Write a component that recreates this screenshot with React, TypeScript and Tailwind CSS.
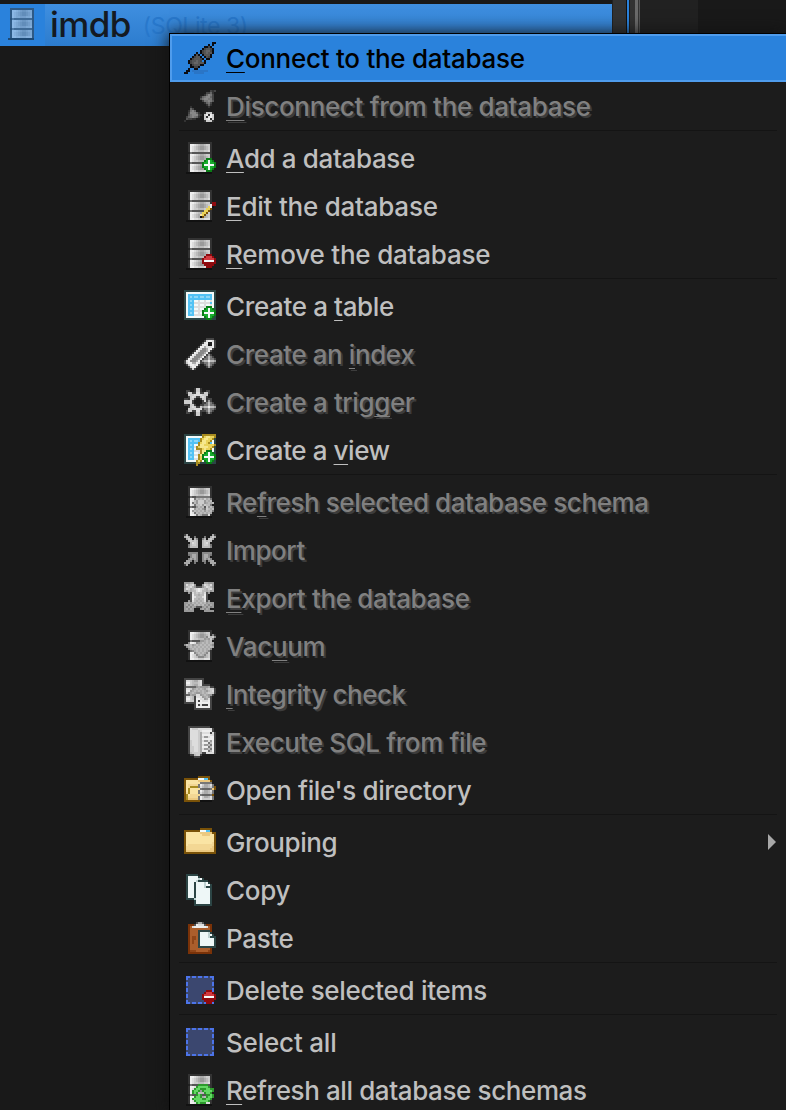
import React from "react";

const PALETTE: Record<string, string> = {
  k: "#0a0c12", W: "#f4fafa", G: "#0a7d16", g: "#17ae2e", R: "#8e0a0e", r: "#d23a40",
  t: "#2c4545", q: "#52c2f4", Q: "#8fd8f6", Y: "#ead35a", y: "#a88c20", o: "#7a5208",
  F: "#fae4a4", P: "#ecc980", N: "#3b476f", n: "#4c74ea", H: "#7a3208", B: "#ab5e2c",
  D: "#8f4518", V: "#eef7f7", v: "#bfd2d2", L: "#63d863", l: "#2c9a2c", S: "#2a75c6",
  E: "#f3d794", h: "#f6e88e",
};

const colorOf = (ch: string) => (/[0-9a-f]/.test(ch) ? `#${ch.repeat(6)}` : PALETTE[ch]);

const overlay = (base: string[], top: string[], x: number, y: number) =>
  base.map((row, r) =>
    row
      .split("")
      .map((c, i) => {
        const t = top[r - y]?.[i - x];
        return t && t !== "." ? t : c;
      })
      .join(""),
  );

const mirror = (row: string) => row.split("").reverse().join("");

const DATABASE = [
  "..333333333333..",
  "..3eedcbaabccd3.",
  "..3edcba99abcc3.",
  "..3edcba99abcc3.",
  "..3edccbbbccdd3.",
  "..275555555557..",
  "..3eedcbaabccd3.",
  "..3edcba99abcc3.",
  "..3edcba99abcc3.",
  "..3edccbbbccdd3.",
  "..275555555557..",
  "..3eedcbaabccd3.",
  "..3edcba99abcc3.",
  "..3edcba99abcc3.",
  "..3eeddcccddde3.",
  ".1111111111111..",
].map((r, i) => (i > 0 && i < 15 ? `${r.slice(0, 13)}3..` : r));

const PLUS = ["..GGG..", ".GgWgG.", "GggWggG", "GWWWWWG", "GggWggG", ".GgWgG.", "..GGG.."];
const MINUS = ["..RRR..", ".RrrrR.", "RrrrrrR", "RWWWWWR", "RRRRRRR", ".RRRRR.", "..RRR.."];
const GRAY_PLUS = ["..494..", ".47b74.", "477b774", "9bbebb9", "477b774", ".47b74.", "..494.."];

const PENCIL = [
  ".......RR",
  "......eRR",
  ".....Ye1.",
  "....YYo..",
  "...YYo...",
  "..YYo....",
  ".FYo.....",
  ".ko......",
];

const ARROWS = [
  "...lllll...",
  "..lLLLLLl..",
  ".lLLlllLLll",
  "lLLl.lLLLLl",
  "lLl...lLLl.",
  "..lLl..llLl",
  ".lLLl..lLLl",
  "lLLLLllLLl.",
  ".lLLLLLLl..",
  "..lLlll....",
];

const GRAY_ARROWS = [
  "..7777777..",
  ".7babacab7.",
  ".b9ccc9bab.",
  "7b9ccc9abab",
  ".7bbc9cbb7.",
  "..9bab.c9b9",
  ".9bab97.bab",
  "9babab9bab7",
  ".7babababa.",
  "..7ba777...",
];

const TABLE = [
  "tttttttttttttttt",
  "tWWWWWWWWWWWWWWt",
  "tWqqqqqqqqqqqqWt",
  "tWqQqQQqQQqQQqWt",
  "tWqqqqqqqqqqqqWt",
  "tWqQqWWdWWdWWdWt",
  "tWqqqddddddddqWt",
  "tWqQqWWdWWdWWdWt",
  "tWqqqdddddddddWt",
  "tWqQqWWdWWdWWdWt",
  "tWqqqdddddddddWt",
  "tWqQqWWdWWdWWdWt",
  "tWqqqdddddddddWt",
  "tWWWWWWWWWWWWWWt",
  "tttttttttttttttt",
  "................",
];

const BOLT = [
  "....yyyyyyy",
  "....yYhhYYy",
  "...yYhhYYy.",
  "...yhhYYy..",
  "..yYhhYy...",
  "..yhhYYYYYy",
  ".yYhhhhYYy.",
  ".yyyYhYYy..",
  "...yhhYy...",
  "...yhYy....",
  "..yhYy.....",
  "..yYy......",
  "..yYy......",
  ".yYy.......",
  ".yy........",
  ".y.........",
];

const CONNECT = [
  "..............kk",
  "............k.k.",
  "..........kk4k..",
  ".........k4554k.",
  "........k45664k.",
  "......k.k45655k.",
  ".....k5k.k555k..",
  "....k455k.k54k..",
  "...k45554k.kk...",
  "..k455654.k.....",
  "..k4566555k.....",
  "...k4555kk......",
  "...kk44k........",
  "..k..kk.........",
  ".kk.SSSSSSSS....",
  "kk...SSSSS......",
];

const DISCONNECT = [
  ".............434",
  "...........4463.",
  "..........36874.",
  "........3678864.",
  "........5788774.",
  ".........477875.",
  "..........3674..",
  "...........363..",
  "...3........3...",
  "...64...........",
  "..3786..........",
  "..488863..3ccc3.",
  "..5788843.ce3ec.",
  ".4678763..c3dec.",
  ".54433....cde3c.",
  "3.........3ccc3.",
];

const TAG = [
  "...........4444.",
  "..........4deed4",
  ".........4de22e4",
  "........4ded12e4",
  ".......4eeaddde4",
  "......4ed88aee4.",
  ".....4ed888ae4..",
  "....4ed888ae4...",
  "...4ed888ae4....",
  "..4ed888ae4.....",
  ".4ed888ae4......",
  "4de888ae4.......",
  "4ceeaaed4.......",
  ".4ceede4........",
  "..4cee4.........",
  "...4c4..........",
];

const GEAR = [
  "................",
  "......3cc3......",
  "..44..3cc3..44..",
  "..4cc44dd44cc4..",
  "...cccddddccc...",
  "...4cdc44cdc4...",
  ".443cc4..4cc344.",
  ".cccd4....4dccc.",
  ".cccd4....4dccc.",
  ".443cc4..4cc344.",
  "...4cdc44cdc4...",
  "...cccddddccc...",
  "..4cc44dd44cc4..",
  "..44..3cc3..44..",
  "......3cc3......",
  "................",
].map((r, i) => (i === 0 ? r : `${r.slice(1)}.`));

const ARROW_IN = ["4a.....", "aca..7.", ".acb.b8", "..bcbcb", "...bdcb", "..7bccb", "..8bbbb"];
const IMPORT_TOP = ARROW_IN.map((r) => `${r}..${mirror(r)}`);
const IMPORT = [
  ...IMPORT_TOP,
  "................",
  "................",
  ...[...IMPORT_TOP].reverse().map((r) => r.replace(/[bcd]/g, (c) => ({ b: "8", c: "a", d: "a" })[c] as string)),
];

const EXPORT = [
  "999aa.....aa999",
  "9dbcd9...9dcbd9",
  "9bcdb95559bdcb9",
  "adcabcdedcbacda",
  "a9babbdedbbab9a",
  "..95dbcbcbd59..",
  "...5ebbabbe5...",
  "...5edbbbde5...",
  "...5ebbabbe5...",
  "..95dbababd59..",
  "99a9bababab9a99",
  "9a8a9babab9a8a9",
  "98a8a95559a8a89",
  "9a8a9...  9a8a9".replace("  ", ""),
  "99999.....99999",
  "...............",
];

const BRUSH = [
  ".............383",
  "...........8.bc8",
  "..........9a9c8.",
  "........99abab..",
  "..8...89abababa.",
  "8bab9ababababa8.",
  ".8ababababababa.",
  "..8ababababab8..",
  "....8abababa8...",
  ".....8ababa8....",
  "......8aba8.....",
  ".......888......",
];

const INTEGRITY = [
  "4444444444......",
  "4ddcbaacd4......",
  "4eecbbbcd4......",
  "4ddcbaacd4444...",
  "4666669a9999a44.",
  "4ddc9ababa9bccc4",
  "4ee9abababa9bcd4",
  "4d9aba99ababccc4",
  "466a99dd9aba994.",
  "4ddcb4ddd9ab94..",
  "4eecb4eedd9ad4..",
  "4ddcc4e4eddde4..",
  "444444eeeeeee4..",
  ".....4e4d444e4..",
  ".....4eeeeeee4..",
  ".....444444444..",
];

const SCRIPT = [
  "..44444444444...",
  "..4dcccddddddd4.",
  "..4ddddcdeeeee4.",
  "..4ddddcadddd4d4",
  "..4ddddcaeeeedd4",
  "..4ddddcad99dee4",
  "..4ddddcaeeeeee4",
  "..4cdddcad99d9e4",
  "..4cdddcaeee7be4",
  "..4cdddcad99b7e4",
  "..4ccddcaeee7be4",
  "..4ccddcad99b7e4",
  "..4ccddcaeee7be4",
  "..4bcccca44dddd4",
  "...44bcc4.......",
  ".....444........",
];

const FOLDER = [
  "................",
  "........oooooo..",
  "ooooooooWWWqqo..",
  "oFFFFFFFPPPPPPoo",
  "oFFFFFFFFPPPPFFo",
  "oFFFFFFFFFFFFFFo",
  "oFFFFFFFFFFFFFFo",
  "oFFFFFFFFFFFFFFo",
  "oFFFFFFFFFFFFFEo",
  "oFEEEEEEEEEEEEEo",
  "oEEEEEEEEEEEEEPo",
  "oEEEEEEEEEEEEPPo",
  "oPPPPPPPPPPPPPPo",
  "oooooooooooooooo",
  "................",
  "................",
];

const OPEN_FOLDER = [
  "................",
  ".......oooooo...",
  "oooooooWWWqqo...",
  "oFFFFFFPPPPPPo..",
  "oFFFFFFFFFFFFo..",
  "oFEEEEEEFFFFFo..",
  "oFEyyyyyyyyyyyoo",
  "oFyFFFFFFFFFFFPo",
  "oFyFFFFFFFFFFPo.",
  "oEyFFFFFFFFEEEo.",
  "oyFEEEEEEEEEEEo.",
  "oyEEEEEEEEEEEo..",
  "oyPPPPPPPPPPPo..",
  "oooooooooooooo..",
  "................",
  "................",
];

const SMALL_DB = [
  ".777777.",
  "7ecaabd7",
  "7dbaabc7",
  ".766667.",
  "7ecaabd7",
  "7dbaabc7",
  ".766667.",
  "7ecaabd7",
  "7eccccd7",
  ".111111.",
];

const COPY = [
  ".tttttt.........",
  ".tVVVVVt........",
  ".tVVVVVvWt......",
  ".tVVVVvttttt....",
  ".tVVVvVVVVvWt...",
  ".tVVVvVVVVvWWt..",
  ".tVVVvVVVVvttt..",
  ".tVVVvVVVVVVVt..",
  ".tVVVvVVVVVVVt..",
  ".tVVVvVVVVVVVt..",
  ".tVVVvVVVVVVVt..",
  ".tVVVvVVVVVVVt..",
  ".ttttvVVVVVVVt..",
  ".....tVVVVVVVt..",
  ".....tVVVVVVVt..",
  ".....ttttttttt..",
].map((r, i) => (i > 3 && i < 15 && i !== 12 ? `${r.slice(0, 5)}t${r.slice(6)}` : r));

const PASTE = [
  "......5aa5......",
  "..HHH5eddd5HHH..",
  "..HBdeeeeeedBH..",
  "..HBBBBBBBBBBH..",
  "..HBBBBttttttH..",
  "..HBBBBtVVVVvt..",
  "..HBBBBtVVVVvWt.",
  "..HBDDBtVVVVvttt",
  "..HBDDBtVVVVVVVt",
  "..HBDBBtVVVVVVVt",
  "..HBDBBtVVVVVVVt",
  "..HBBBBtVVVVVVVt",
  "..HBBBBttttttttt",
  "..HBBBBBBBBBBH..",
  "..HDDDBBBBBBDH..",
  "..HHHHHHHHHHHH..",
];

const SELECTION = [
  "................",
  ".nnNnnNnnNnnNnn.",
  ".nNNNNNNNNNNNNn.",
  ".NNNNNNNNNNNNNN.",
  ".nNNNNNNNNNNNNn.",
  ".nNNNNNNNNNNNNn.",
  ".NNNNNNNNNNNNNN.",
  ".nNNNNNNNNNNNNn.",
  ".nNNNNNNNNNNNNn.",
  ".NNNNNNNNNNNNNN.",
  ".nNNNNNNNNNNNNn.",
  ".nNNNNNNNNNNNNn.",
  ".NNNNNNNNNNNNNN.",
  ".nNNNNNNNNNNNNn.",
  ".nnNnnNnnNnnNnn.",
  "................",
];

const ICONS: Record<string, string[]> = {
  database: DATABASE,
  connect: CONNECT,
  disconnect: DISCONNECT,
  add: overlay(DATABASE, PLUS, 9, 8),
  edit: overlay(DATABASE, PENCIL, 7, 6),
  remove: overlay(DATABASE, MINUS, 9, 8),
  table: overlay(TABLE, PLUS, 9, 8),
  index: overlay(TAG, GRAY_PLUS, 9, 8),
  trigger: overlay(GEAR, GRAY_PLUS, 9, 7),
  view: overlay(overlay(TABLE, BOLT, 5, 0), PLUS, 9, 8),
  refreshOne: overlay(DATABASE, GRAY_ARROWS, 4, 5),
  import: IMPORT,
  export: EXPORT,
  vacuum: overlay(DATABASE, BRUSH, 0, 2),
  integrity: INTEGRITY,
  script: SCRIPT,
  openFolder: overlay(OPEN_FOLDER, SMALL_DB, 7, 4),
  folder: FOLDER,
  copy: COPY,
  paste: PASTE,
  deleteSelected: overlay(SELECTION, MINUS, 9, 8),
  selectAll: SELECTION,
  refreshAll: overlay(DATABASE, ARROWS, 4, 5),
};

function PixelIcon({ name, className = "" }: { name: string; className?: string }) {
  return (
    <svg viewBox="0 0 16 16" shapeRendering="crispEdges" className={`h-8 w-8 shrink-0 ${className}`}>
      {ICONS[name].flatMap((row, y) =>
        row.split("").map((ch, x) =>
          ch === "." || x > 15 ? null : <rect key={`${x}-${y}`} x={x} y={y} width="1" height="1" fill={colorOf(ch)} />,
        ),
      )}
    </svg>
  );
}

type Item = {
  icon: string;
  label: string;
  tracking: string;
  disabled?: boolean;
  active?: boolean;
  submenu?: boolean;
};

const GROUPS: Item[][] = [
  [
    { icon: "connect", label: "&Connect to the database", tracking: "tracking-[-0.27px]", active: true },
    { icon: "disconnect", label: "&Disconnect from the database", tracking: "tracking-[-0.34px]", disabled: true },
  ],
  [
    { icon: "add", label: "&Add a database", tracking: "tracking-[-0.36px]" },
    { icon: "edit", label: "&Edit the database", tracking: "tracking-[-0.24px]" },
    { icon: "remove", label: "&Remove the database", tracking: "tracking-[-0.21px]" },
  ],
  [
    { icon: "table", label: "Create a &table", tracking: "tracking-[-0.37px]" },
    { icon: "index", label: "Create an &index", tracking: "tracking-[-0.42px]", disabled: true },
    { icon: "trigger", label: "Create a trig&ger", tracking: "tracking-[-0.39px]", disabled: true },
    { icon: "view", label: "Create a &view", tracking: "tracking-[-0.43px]" },
  ],
  [
    { icon: "refreshOne", label: "Re&fresh selected database schema", tracking: "tracking-[-0.41px]", disabled: true },
    { icon: "import", label: "Import", tracking: "tracking-[-0.4px]", disabled: true },
    { icon: "export", label: "&Export the database", tracking: "tracking-[-0.33px]", disabled: true },
    { icon: "vacuum", label: "Vac&uum", tracking: "tracking-[-0.3px]", disabled: true },
    { icon: "integrity", label: "&Integrity check", tracking: "tracking-[-0.45px]", disabled: true },
    { icon: "script", label: "Execute SQL from file", tracking: "tracking-[-0.38px]", disabled: true },
    { icon: "openFolder", label: "Open file's directory", tracking: "tracking-[-0.36px]" },
  ],
  [
    { icon: "folder", label: "Grouping", tracking: "tracking-[-0.45px]", submenu: true },
    { icon: "copy", label: "Copy", tracking: "tracking-[-0.3px]" },
    { icon: "paste", label: "Paste", tracking: "tracking-[-0.35px]" },
  ],
  [{ icon: "deleteSelected", label: "Delete selected items", tracking: "tracking-[-0.29px]" }],
  [
    { icon: "selectAll", label: "Select all", tracking: "tracking-[-0.2px]" },
    { icon: "refreshAll", label: "&Refresh all database schemas", tracking: "tracking-[-0.39px]" },
  ],
];

function Label({ text }: { text: string }) {
  const at = text.indexOf("&");
  if (at < 0) return <>{text}</>;
  return (
    <>
      {text.slice(0, at)}
      <span className="underline decoration-1 underline-offset-[4px] [text-decoration-skip-ink:none]">{text[at + 1]}</span>
      {text.slice(at + 2)}
    </>
  );
}

function MenuRow({ item }: { item: Item }) {
  const tone = item.active
    ? "bg-[#2a82dc] text-black border-[#4f9cec]"
    : item.disabled
      ? "text-[#808080] border-transparent [text-shadow:2px_2px_0_#3c3c3c]"
      : "text-[#bfbfbf] border-transparent";
  return (
    <div className={`flex h-12 items-center border-y-2 border-l-2 pl-3 pr-2.5 ${tone}`}>
      <PixelIcon name={item.icon} />
      <span className={`ml-2.5 whitespace-pre pt-0.5 text-[26px] font-[450] leading-[44px] ${item.tracking}`}>
        <Label text={item.label} />
      </span>
      {item.submenu && (
        <svg viewBox="0 0 8 16" className="ml-auto h-4 w-2">
          <path d="M0 0L8 8L0 16Z" fill="#a8a8a8" />
        </svg>
      )}
    </div>
  );
}

export default function App() {
  return (
    <div className="relative h-[1110px] w-[786px] overflow-hidden bg-[#191919] font-['Inter',sans-serif]">
      <div className="flex h-[46px]">
        <div className="flex w-[612px] flex-col pt-1">
          <div className="flex h-[42px] bg-[#2a82dc]">
            <div className="flex w-[45px] items-start pl-1.5 pt-1">
              <PixelIcon name="database" className="opacity-50" />
            </div>
            <div className="flex flex-1 bg-linear-to-b from-[#3f8fe0] to-[#2c7cce] pl-[5px]">
              <span className="text-[35px] font-[450] leading-[41px] tracking-[-0.6px] text-[#141a22]">imdb</span>
              <span className="ml-[12px] mt-0.5 text-[23px] leading-[40px] tracking-[-0.4px] text-[#2878cc]">(SQLite 3)</span>
            </div>
          </div>
        </div>
        <div className="w-[14px] border-l border-[#222] bg-[#333]" />
        <div className="w-px bg-[#111]" />
        <div className="w-[2px] bg-[#2a82dc]" />
        <div className="w-[6px] border-l border-[#1c1c1c] bg-[#333]" />
        <div className="w-[3px] bg-[#6a6a6a]" />
        <div className="w-px bg-[#333]" />
        <div className="w-px bg-[#555]" />
        <div className="w-[58px] bg-[#212121]" />
      </div>

      <div className="absolute left-[169px] top-[33px] w-[617px] border-l border-t border-black bg-[#1c1c1c] shadow-[0_0_16px_#111]">
        {GROUPS.map((group, i) => (
          <React.Fragment key={i}>
            {i > 0 && <div className="ml-[9px] mr-[9px] h-1 border-t border-[#141414]" />}
            {group.map((item) => (
              <MenuRow key={item.label} item={item} />
            ))}
          </React.Fragment>
        ))}
      </div>
    </div>
  );
}
